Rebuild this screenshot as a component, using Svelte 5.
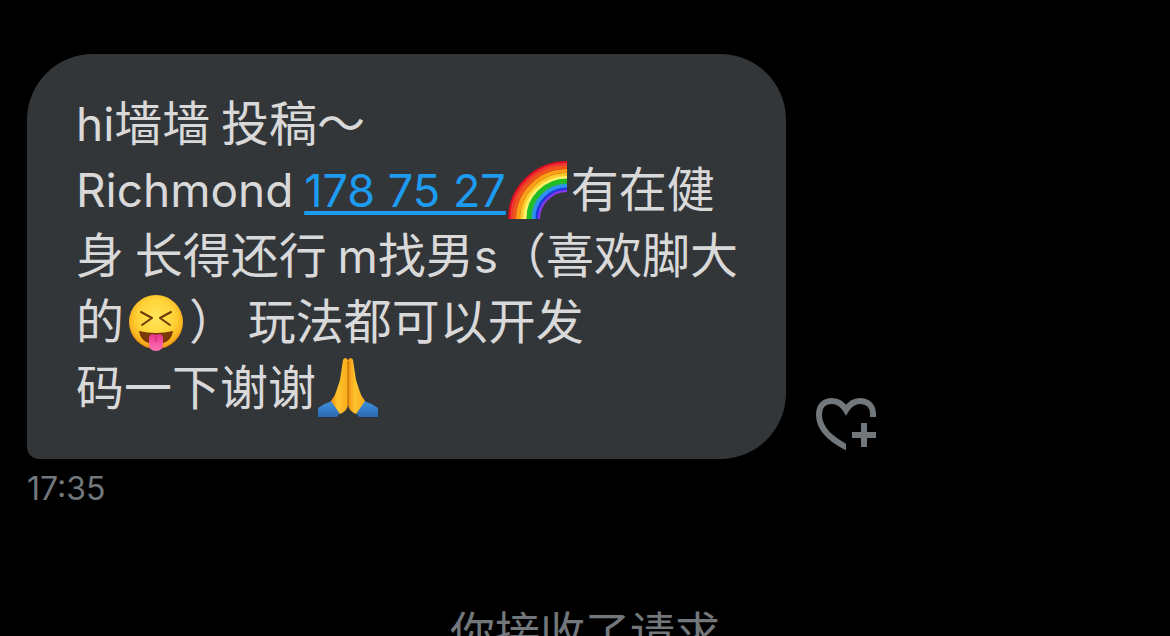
<script>
  const sentAt = '17:35';
</script>

<main>
  <section class="message">
    <div class="row">
      <p class="bubble">
        <span class="latin">hi</span>墙墙 投稿～<br /><span class="latin">Richmond</span> <a href="tel:1787527">178 75 27</a><svg class="emoji" viewBox="0 0 62 62" role="img" aria-label="🌈">
          <g fill="none" stroke-width="4">
            <path stroke="#d90f1c" d="M3 60A57 56 0 0 1 60 4" />
            <path stroke="#f7343a" stroke-width="2" d="M4 60A56 55 0 0 1 60 5" />
            <path stroke="#f4511c" d="M7 60A53 52 0 0 1 60 8" />
            <path stroke="#ff9e14" d="M11 60A49 48 0 0 1 60 12" />
            <path stroke="#ffc928" d="M15 60A45 44 0 0 1 60 16" />
            <path stroke="#fff06a" d="M18 60A42 41 0 0 1 60 19" />
            <path stroke="#20bd24" stroke-width="5" d="M22 60A38 37 0 0 1 60 22" />
            <path stroke="#2eae68" stroke-width="2" d="M25 60A35 34 0 0 1 60 25" />
            <path stroke="#2c92f2" d="M27 60A33 32 0 0 1 60 27" />
            <path stroke="#2339db" stroke-width="3" d="M30 60A30 29 0 0 1 60 30" />
            <path stroke="#8b38ef" stroke-width="2" d="M32 60A28 28 0 0 1 60 32" />
          </g>
        </svg>有在健身 长得还行 <span class="latin">m</span>找男<span class="latin">s</span>（喜欢脚大的<svg class="emoji" viewBox="0 0 62 62" role="img" aria-label="😝">
          <defs>
            <radialGradient id="face" cx="50%" cy="42%" r="58%">
              <stop offset="0" stop-color="#ffe65a" />
              <stop offset="0.6" stop-color="#ffd338" />
              <stop offset="0.85" stop-color="#fbb41e" />
              <stop offset="1" stop-color="#ec8f12" />
            </radialGradient>
            <linearGradient id="tongue" x2="0" y2="1">
              <stop offset="0" stop-color="#e8368c" />
              <stop offset="1" stop-color="#ff73b4" />
            </linearGradient>
          </defs>
          <circle cx="31" cy="31" r="27" fill="url(#face)" />
          <path fill="none" stroke="#6e3a08" stroke-width="2" stroke-linecap="round" stroke-linejoin="round" d="M16 21l11 6-10 7M46 21l-11 6 10 7" />
          <path fill="#7a3707" d="M14 40q17 4 34 0-2 13-17 13T14 40z" />
          <path fill="url(#tongue)" d="M24 46q1-4 7-2 6-2 7 2v7q0 7-7 7t-7-7z" />
          <path fill="none" stroke="#c7246f" d="M31 45v6" />
        </svg>） 玩法都可以开发<br />码一下谢谢<svg class="emoji" viewBox="0 0 62 62" role="img" aria-label="🙏">
          <defs>
            <linearGradient id="palm">
              <stop offset="0" stop-color="#ee9010" />
              <stop offset="0.4" stop-color="#ffc42e" />
              <stop offset="1" stop-color="#f9ab1a" />
            </linearGradient>
            <linearGradient id="sleeve" x2="0" y2="1">
              <stop offset="0" stop-color="#3f92e0" />
              <stop offset="1" stop-color="#2c68ad" />
            </linearGradient>
          </defs>
          <path fill="url(#sleeve)" d="M1 51q7-5 14-7l9 10-4 6H1zM61 51q-7-5-14-7l-9 10 4 6h19z" />
          <path fill="url(#palm)" d="M31 3q-3-4-5 0l-3 20-4 12q-1 4-5 9l9 13q8-3 8-11z" />
          <path fill="url(#palm)" d="M31 3q3-4 5 0l3 20 4 12q1 4 5 9l-9 13q-8-3-8-11z" />
          <path fill="none" stroke="#b96709" stroke-width="1" d="M31 4v43" />
        </svg>
      </p>
      <button type="button" aria-label="Add reaction">
        <svg viewBox="0 0 60 54" aria-hidden="true">
          <clipPath id="heart-edge">
            <path d="M0 0H60V20H30V54H0z" />
          </clipPath>
          <path clip-path="url(#heart-edge)" fill="none" stroke="#72777b" stroke-width="6" d="M57 22V17C57 8 51 4 44 4C37 4 33 8 30 13C27 8 23 4 16 4C8 4 3 9 3 18C3 31 15 43 34 52" />
          <path fill="#72777b" d="M45 26h6v9h9v6h-9v9h-6v-9h-9v-6h9z" />
        </svg>
      </button>
    </div>
    <time datetime={sentAt}>{sentAt}</time>
  </section>
  <p class="notice">你接收了请求</p>
</main>

<style>
  :global(html) {
    background: #000;
    overflow-x: hidden;
  }

  :global(body) {
    margin: 0;
    background: #000;
  }

  main {
    box-sizing: border-box;
    height: 100vh;
    padding: 54px 27px 0;
    overflow: hidden;
    color: #d9d9d9;
    font-family: Inter, "Noto Sans CJK SC", sans-serif;
  }

  .row {
    display: flex;
    align-items: flex-end;
    gap: 30px;
  }

  .bubble {
    box-sizing: border-box;
    width: 68%;
    margin: 0;
    padding: 33px 36px 42px 49px;
    border-radius: 66px 66px 66px 12px;
    background: #333639;
    font-family: "Noto Sans CJK SC", sans-serif;
    font-size: 48px;
    line-height: 66px;
  }

  .latin,
  a {
    font-family: Inter, sans-serif;
    font-size: 46px;
    line-height: 1;
  }

  .emoji {
    width: 62px;
    height: 62px;
    margin: -8px 2px -8px 1px;
    vertical-align: -6px;
  }

  a {
    color: #1d9bf0;
    font-size: 45px;
    text-decoration: underline;
    text-decoration-thickness: 4px;
    text-underline-offset: 4px;
    text-decoration-skip-ink: none;
  }

  button {
    display: flex;
    margin: 0 0 8px;
    padding: 0;
    border: 0;
    background: none;
    cursor: pointer;
  }

  button svg {
    width: 60px;
    height: 54px;
  }

  time {
    display: block;
    margin-top: 8px;
    color: #72777b;
    font-size: 32px;
    line-height: 44px;
  }

  .notice {
    margin: 90px 0 0;
    color: #72777b;
    font-size: 45px;
    line-height: 66px;
    text-align: center;
  }
</style>
